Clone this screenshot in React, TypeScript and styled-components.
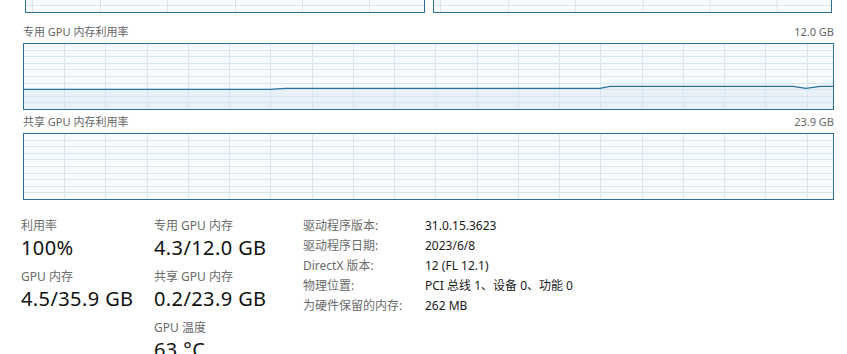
import React from "react";
import styled, { createGlobalStyle } from "styled-components";

const GlobalStyle = createGlobalStyle`
  html, body {
    margin: 0;
    padding: 0;
    background: #ffffff;
  }
  body {
    font-family: "Noto Sans", "Noto Sans CJK SC", sans-serif;
    color: #1a1a1a;
    overflow: hidden;
  }
`;

const LINE = "#2a71a0";
const GRID = "#d8e5ef";
const FILL = "#e9f1f8";

const Page = styled.div`
  width: 847px;
  height: 354px;
  overflow: hidden;
  background: #ffffff;
`;

const TopRow = styled.div`
  display: flex;
  gap: 8px;
  padding: 0 15px 0 25px;
  margin-bottom: 7px;
`;

const CutBox = styled.div`
  flex: 1;
  height: 13px;
  box-sizing: border-box;
  border: 1px solid ${LINE};
  border-top: none;
  background: #fafcfe;
  overflow: hidden;
`;

const ChartSection = styled.section`
  padding: 0 13px 0 23px;
`;

const ChartHead = styled.div`
  display: flex;
  justify-content: space-between;
  align-items: flex-end;
  height: 23px;
  padding-bottom: 4px;
  box-sizing: border-box;
  font-size: 11px;
  line-height: 14px;
  color: #666666;
`;

const Chart = styled.div`
  height: 67px;
  box-sizing: border-box;
  border: 1px solid ${LINE};
  background: #f8fbfd;
  overflow: hidden;
`;

const Svg = styled.svg`
  display: block;
  width: 100%;
  height: 100%;
`;

const Info = styled.section`
  display: grid;
  grid-template-columns: 133px 149px auto;
  padding-left: 21px;
`;

const StatCol = styled.div`
  padding-top: 18px;
`;

const Stat = styled.div`
  margin-bottom: 7px;
`;

const StatLabel = styled.div`
  font-size: 12px;
  line-height: 16px;
  color: #6b6b6b;
`;

const StatValue = styled.div`
  font-size: 20px;
  line-height: 28px;
  letter-spacing: 0.4px;
  color: #111111;
  white-space: nowrap;
`;

const Props = styled.dl`
  margin: 0;
  padding-top: 16px;
  display: grid;
  grid-template-columns: 122px auto;
  grid-auto-rows: 20px;
  font-size: 12px;
  line-height: 20px;
`;

const PropKey = styled.dt`
  color: #6b6b6b;
`;

const PropValue = styled.dd`
  margin: 0;
  color: #1a1a1a;
`;

interface GridProps {
  width: number;
  height: number;
  step: number;
  startX: number;
  rowStep: number;
  startY: number;
  points?: [number, number][];
}

const GridChart: React.FC<GridProps> = ({ width, height, step, startX, rowStep, startY, points }) => {
  const xs: number[] = [];
  for (let x = startX; x < width; x += step) xs.push(Math.round(x) + 0.5);
  const ys: number[] = [];
  for (let y = startY; y < height; y += rowStep) ys.push(Math.round(y) + 0.5);
  const line = points ? points.map(p => p.join(",")).join(" ") : "";
  const area = points ? `0,${height} ${line} ${width},${height}` : "";
  return (
    <Svg viewBox={`0 0 ${width} ${height}`} preserveAspectRatio="none">
      {points && <polygon points={area} fill={FILL} />}
      {ys.map(y => (
        <line key={"h" + y} x1={0} x2={width} y1={y} y2={y} stroke={GRID} strokeWidth={1} shapeRendering="crispEdges" />
      ))}
      {xs.map(x => (
        <line key={"v" + x} x1={x} x2={x} y1={0} y2={height} stroke={GRID} strokeWidth={1} shapeRendering="crispEdges" />
      ))}
      {points && <polyline points={line} fill="none" stroke={LINE} strokeWidth={1.2} />}
    </Svg>
  );
};

const dedicated: [number, number][] = [
  [0, 45.3],
  [246, 45.3],
  [261, 44.3],
  [576, 44.3],
  [586, 42.4],
  [769, 42.4],
  [782, 44.4],
  [796, 42.4],
  [809, 42.4],
];

const stats = [
  [
    { label: "利用率", value: "100%" },
    { label: "GPU 内存", value: "4.5/35.9 GB" },
  ],
  [
    { label: "专用 GPU 内存", value: "4.3/12.0 GB" },
    { label: "共享 GPU 内存", value: "0.2/23.9 GB" },
    { label: "GPU 温度", value: "63 °C" },
  ],
];

const details = [
  ["驱动程序版本:", "31.0.15.3623"],
  ["驱动程序日期:", "2023/6/8"],
  ["DirectX 版本:", "12 (FL 12.1)"],
  ["物理位置:", "PCI 总线 1、设备 0、功能 0"],
  ["为硬件保留的内存:", "262 MB"],
];

export default function App() {
  return (
    <Page>
      <GlobalStyle />
      <TopRow>
        <CutBox>
          <GridChart width={397} height={12} step={67.4} startX={6.3} rowStep={6.6} startY={5} />
        </CutBox>
        <CutBox>
          <GridChart width={398} height={12} step={67.4} startX={6.3} rowStep={6.6} startY={5} />
        </CutBox>
      </TopRow>

      <ChartSection>
        <ChartHead>
          <span>专用 GPU 内存利用率</span>
          <span>12.0 GB</span>
        </ChartHead>
        <Chart>
          <GridChart width={809} height={65} step={41.24} startX={40.2} rowStep={6.6} startY={5.6} points={dedicated} />
        </Chart>
        <ChartHead>
          <span>共享 GPU 内存利用率</span>
          <span>23.9 GB</span>
        </ChartHead>
        <Chart>
          <GridChart width={809} height={65} step={41.24} startX={40.2} rowStep={6.6} startY={5.6} />
        </Chart>
      </ChartSection>

      <Info>
        {stats.map((col, i) => (
          <StatCol key={i}>
            {col.map(s => (
              <Stat key={s.label}>
                <StatLabel>{s.label}</StatLabel>
                <StatValue>{s.value}</StatValue>
              </Stat>
            ))}
          </StatCol>
        ))}
        <Props>
          {details.map(([k, v]) => (
            <React.Fragment key={k}>
              <PropKey>{k}</PropKey>
              <PropValue>{v}</PropValue>
            </React.Fragment>
          ))}
        </Props>
      </Info>
    </Page>
  );
}
